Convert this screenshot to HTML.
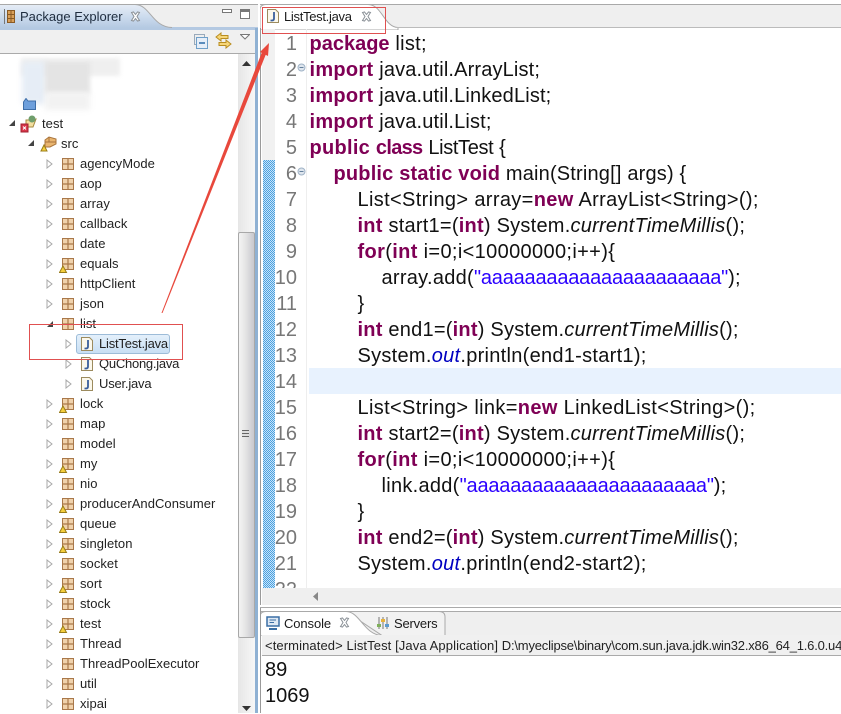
<!DOCTYPE html>
<html><head><meta charset="utf-8"><style>
html,body{margin:0;padding:0}
body{width:841px;height:713px;overflow:hidden;position:relative;background:#fff;font-family:"Liberation Sans",sans-serif;color:#111}
div,svg{position:absolute}
.r{left:80px;font-size:13px;line-height:20px;height:20px;white-space:nowrap;letter-spacing:.05px;color:#222;margin-top:1px}
.c{left:309.5px;font-size:20px;line-height:26px;height:26px;white-space:pre;letter-spacing:.28px;color:#111;margin-top:1px}
.n{left:270px;width:27px;text-align:right;font-size:20px;line-height:26px;height:26px;color:#777;margin-top:1px}
b{color:#7f0055;font-weight:bold}
i.f{color:#0000c0}i.m{color:#111}
.s{color:#2a00ff;letter-spacing:-.2px}
.j{letter-spacing:.15px}
</style></head><body>
<svg width="0" height="0" style="left:0;top:0"><defs>
<symbol id="pk" viewBox="0 0 12 12"><rect x=".5" y=".5" width="11" height="11" fill="#f0d2ac" stroke="#a9784a"/><path d="M6 .5V11.500M.5 6H11.500" stroke="#a9784a" stroke-width="1.200"/></symbol>
<symbol id="pw" viewBox="0 0 15 15"><rect x="3.500" y=".5" width="11" height="11" fill="#f0d2ac" stroke="#a9784a"/><path d="M9 .5V11.500M3.500 6H14.500" stroke="#a9784a" stroke-width="1.200"/><path d="M.5 14.500L4 8L7.500 14.500Z" fill="#f5cf3e" stroke="#9a7d18"/></symbol>
<symbol id="tri" viewBox="0 0 7 10"><path d="M1 1L6 5L1 9Z" fill="#fff" stroke="#a9a9a9"/></symbol>
<symbol id="jf" viewBox="0 0 12 14"><path d="M.5.500H8.500L11.500 3.500V13.500H.5Z" fill="#fbf8ec" stroke="#9c8b5e"/><path d="M7 3V9.500Q7 11.500 5 11.500H3.500" fill="none" stroke="#3a5f9c" stroke-width="1.800"/></symbol>
<symbol id="x" viewBox="0 0 11 11"><path d="M1.500 1.500L3.500 1L5.500 3.500L7.500 1L9.500 1.500L7 5.500L9.500 9.500L7.500 10L5.500 7.500L3.500 10L1.500 9.500L4 5.500Z" fill="#fff" stroke="#8a9096"/></symbol>
<linearGradient id="tb" x1="0" y1="0" x2="0" y2="1"><stop offset="0" stop-color="#e6edf6"/><stop offset=".5" stop-color="#cddcee"/><stop offset="1" stop-color="#b4c9e2"/></linearGradient>
</defs></svg>

<!-- Left view -->
<div style="left:0;top:4px;width:258px;height:23px;background:#efefef;border-top:1px solid #a9a9a9"></div>
<div style="left:0;top:27px;width:258px;height:3px;background:#b4c9e2"></div>
<svg style="left:0;top:4px" width="175" height="24"><path d="M0 .5H135C150 .5 152 23 172 23.500V24H0Z" fill="url(#tb)" stroke="none"/><path d="M0 .5H135C150 .5 152 23 172 23.500" fill="none" stroke="#a9a9a9"/></svg>
<svg style="left:4px;top:9px" width="11" height="15"><path d="M.5 0V15" stroke="#777"/><rect x="3.500" y="1.500" width="7" height="12" fill="#d9a05a" stroke="#8a5a24"/><path d="M7 1V14M3 5.500H11M3 9.500H11" stroke="#8a5a24"/></svg>
<div style="left:20px;top:7px;font-size:13px;line-height:20px;color:#1e2c3e;white-space:nowrap">Package Explorer</div>
<svg style="left:130px;top:11px" width="11" height="11"><use href="#x"/></svg>
<div style="left:222px;top:9px;width:8px;height:2px;border:1px solid #777;background:#fff"></div>
<div style="left:240px;top:9px;width:8px;height:6px;border:1px solid #777;border-top:3px solid #777;background:#fff"></div>
<div style="left:0;top:30px;width:255px;height:23px;background:#f0f0f0;border-bottom:1px solid #aaa"></div>
<svg style="left:194px;top:34px" width="14" height="15"><rect x=".5" y=".5" width="10" height="10" fill="#eee" stroke="#9ab"/><rect x="2.500" y="3.500" width="11" height="11" fill="#e6eef8" stroke="#6f9fc8"/><path d="M5 9H11" stroke="#2b6ca8" stroke-width="1.500"/></svg>
<svg style="left:215px;top:32px" width="17" height="17"><path d="M1 5L6 1V3.500H13V6.500H6V9Z" fill="#f7d679" stroke="#b98d1f"/><path d="M16 12L11 8V10.500H4V13.500H11V16Z" fill="#f7d679" stroke="#b98d1f"/></svg>
<svg style="left:240px;top:34px" width="10" height="6"><path d="M.5 .5H9.500L5 5Z" fill="#fff" stroke="#777"/></svg>
<div style="left:255px;top:28px;width:3px;height:685px;background:#8fb1d3"></div>

<!-- blur patch -->
<div style="left:21px;top:58px;width:99px;height:18px;background:#efefef;filter:blur(2px)"></div>
<div style="left:22px;top:62px;width:24px;height:42px;background:#e6edf6;filter:blur(3px)"></div>
<div style="left:45px;top:62px;width:45px;height:32px;background:#e4e4e4;filter:blur(2px)"></div>
<div style="left:45px;top:92px;width:45px;height:18px;background:#f2f2f2;filter:blur(3px)"></div>
<svg style="left:23px;top:98px" width="13" height="12"><path d="M.5 11.500V4L3 .5L5 3H12.500V11.500Z" fill="#6d9fdc" stroke="#3e6ea8"/></svg>

<!-- Scrollbar -->
<div style="left:238px;top:54px;width:17px;height:659px;background:linear-gradient(90deg,#e6e6e6,#f7f7f7)"></div>
<svg style="left:242px;top:61px" width="9" height="6"><path d="M0 5L4.500 0L9 5Z" fill="#333"/></svg>
<svg style="left:242px;top:706px" width="9" height="5"><path d="M0 0L4.500 5L9 0Z" fill="#333"/></svg>
<div style="left:238px;top:232px;width:15px;height:404px;border:1px solid #a8a8a8;border-radius:2px;background:linear-gradient(90deg,#f3f3f3,#e6e6e6 40%,#c8c8ce)"></div>
<div style="left:242px;top:430px;width:7px;height:7px;background:repeating-linear-gradient(#666 0 1px,#ddd 1px 3px)"></div>

<!-- Tree -->
<svg style="left:8px;top:119px" width="8" height="8"><path d="M7 1V7H1Z" fill="#444"/></svg>
<svg style="left:20px;top:115px" width="18" height="18"><path d="M6 5H13L16 4L13 12H6Z" fill="#f3dfa0" stroke="#a5893f"/><circle cx="12" cy="4" r="3.500" fill="#6f9e6c"/><rect x="1" y="9" width="7" height="8" fill="#d9374a" stroke="#a02030"/><path d="M3 11.500L6 14.500M6 11.500L3 14.500" stroke="#fff"/></svg>
<div class="r" style="left:42px;top:113px">test</div>
<svg style="left:27px;top:139px" width="8" height="8"><path d="M7 1V7H1Z" fill="#444"/></svg>
<svg style="left:40px;top:136px" width="17" height="16"><path d="M5 4L9 1L16 3V8L10 11H5Z" fill="#e9b56f" stroke="#a9743c"/><path d="M9 1V6M5 6H16" stroke="#a9743c"/><path d="M1 15L4 9L7 15Z" fill="#f5cf3e" stroke="#9a7d18"/></svg>
<div class="r" style="left:61px;top:133px">src</div>

<svg style="left:46px;top:159px" width="7" height="10"><use href="#tri"/></svg><svg style="left:62px;top:158px" width="12" height="12"><use href="#pk"/></svg><div class="r" style="top:153px">agencyMode</div>
<svg style="left:46px;top:179px" width="7" height="10"><use href="#tri"/></svg><svg style="left:62px;top:178px" width="12" height="12"><use href="#pk"/></svg><div class="r" style="top:173px">aop</div>
<svg style="left:46px;top:199px" width="7" height="10"><use href="#tri"/></svg><svg style="left:62px;top:198px" width="12" height="12"><use href="#pk"/></svg><div class="r" style="top:193px">array</div>
<svg style="left:46px;top:219px" width="7" height="10"><use href="#tri"/></svg><svg style="left:62px;top:218px" width="12" height="12"><use href="#pk"/></svg><div class="r" style="top:213px">callback</div>
<svg style="left:46px;top:239px" width="7" height="10"><use href="#tri"/></svg><svg style="left:62px;top:238px" width="12" height="12"><use href="#pk"/></svg><div class="r" style="top:233px">date</div>
<svg style="left:46px;top:259px" width="7" height="10"><use href="#tri"/></svg><svg style="left:59px;top:258px" width="15" height="15"><use href="#pw"/></svg><div class="r" style="top:253px">equals</div>
<svg style="left:46px;top:279px" width="7" height="10"><use href="#tri"/></svg><svg style="left:62px;top:278px" width="12" height="12"><use href="#pk"/></svg><div class="r" style="top:273px">httpClient</div>
<svg style="left:46px;top:299px" width="7" height="10"><use href="#tri"/></svg><svg style="left:62px;top:298px" width="12" height="12"><use href="#pk"/></svg><div class="r" style="top:293px">json</div>
<svg style="left:46px;top:320px" width="8" height="8"><path d="M7 1V7H1Z" fill="#444"/></svg><svg style="left:62px;top:318px" width="12" height="12"><use href="#pk"/></svg><div class="r" style="top:313px">list</div>

<div style="left:76px;top:334px;width:92px;height:18px;background:linear-gradient(#e4f0fb,#c8dff4);border:1px solid #9dbcd8;border-radius:3px"></div>
<svg style="left:65px;top:339px" width="7" height="10"><use href="#tri"/></svg><svg style="left:81px;top:337px" width="12" height="14"><use href="#jf"/></svg><div class="r" style="left:99px;top:333px;letter-spacing:-.2px">ListTest.java</div>
<svg style="left:65px;top:359px" width="7" height="10"><use href="#tri"/></svg><svg style="left:81px;top:357px" width="12" height="14"><use href="#jf"/></svg><div class="r" style="left:99px;top:353px;letter-spacing:-.25px">QuChong.java</div>
<svg style="left:65px;top:379px" width="7" height="10"><use href="#tri"/></svg><svg style="left:81px;top:377px" width="12" height="14"><use href="#jf"/></svg><div class="r" style="left:99px;top:373px;letter-spacing:-.2px">User.java</div>

<svg style="left:46px;top:399px" width="7" height="10"><use href="#tri"/></svg><svg style="left:59px;top:398px" width="15" height="15"><use href="#pw"/></svg><div class="r" style="top:393px">lock</div>
<svg style="left:46px;top:419px" width="7" height="10"><use href="#tri"/></svg><svg style="left:62px;top:418px" width="12" height="12"><use href="#pk"/></svg><div class="r" style="top:413px">map</div>
<svg style="left:46px;top:439px" width="7" height="10"><use href="#tri"/></svg><svg style="left:62px;top:438px" width="12" height="12"><use href="#pk"/></svg><div class="r" style="top:433px">model</div>
<svg style="left:46px;top:459px" width="7" height="10"><use href="#tri"/></svg><svg style="left:59px;top:458px" width="15" height="15"><use href="#pw"/></svg><div class="r" style="top:453px">my</div>
<svg style="left:46px;top:479px" width="7" height="10"><use href="#tri"/></svg><svg style="left:62px;top:478px" width="12" height="12"><use href="#pk"/></svg><div class="r" style="top:473px">nio</div>
<svg style="left:46px;top:499px" width="7" height="10"><use href="#tri"/></svg><svg style="left:59px;top:498px" width="15" height="15"><use href="#pw"/></svg><div class="r" style="top:493px">producerAndConsumer</div>
<svg style="left:46px;top:519px" width="7" height="10"><use href="#tri"/></svg><svg style="left:59px;top:518px" width="15" height="15"><use href="#pw"/></svg><div class="r" style="top:513px">queue</div>
<svg style="left:46px;top:539px" width="7" height="10"><use href="#tri"/></svg><svg style="left:59px;top:538px" width="15" height="15"><use href="#pw"/></svg><div class="r" style="top:533px">singleton</div>
<svg style="left:46px;top:559px" width="7" height="10"><use href="#tri"/></svg><svg style="left:62px;top:558px" width="12" height="12"><use href="#pk"/></svg><div class="r" style="top:553px">socket</div>
<svg style="left:46px;top:579px" width="7" height="10"><use href="#tri"/></svg><svg style="left:59px;top:578px" width="15" height="15"><use href="#pw"/></svg><div class="r" style="top:573px">sort</div>
<svg style="left:46px;top:599px" width="7" height="10"><use href="#tri"/></svg><svg style="left:62px;top:598px" width="12" height="12"><use href="#pk"/></svg><div class="r" style="top:593px">stock</div>
<svg style="left:46px;top:619px" width="7" height="10"><use href="#tri"/></svg><svg style="left:59px;top:618px" width="15" height="15"><use href="#pw"/></svg><div class="r" style="top:613px">test</div>
<svg style="left:46px;top:639px" width="7" height="10"><use href="#tri"/></svg><svg style="left:62px;top:638px" width="12" height="12"><use href="#pk"/></svg><div class="r" style="top:633px">Thread</div>
<svg style="left:46px;top:659px" width="7" height="10"><use href="#tri"/></svg><svg style="left:62px;top:658px" width="12" height="12"><use href="#pk"/></svg><div class="r" style="top:653px">ThreadPoolExecutor</div>
<svg style="left:46px;top:679px" width="7" height="10"><use href="#tri"/></svg><svg style="left:62px;top:678px" width="12" height="12"><use href="#pk"/></svg><div class="r" style="top:673px">util</div>
<svg style="left:46px;top:699px" width="7" height="10"><use href="#tri"/></svg><svg style="left:62px;top:698px" width="12" height="12"><use href="#pk"/></svg><div class="r" style="top:693px">xipai</div>

<!-- Editor -->
<div style="left:258px;top:0;width:583px;height:713px;background:#fff"></div>
<div style="left:260px;top:4px;width:581px;height:23px;background:#efefef;border-top:1px solid #a9a9a9"></div>
<svg style="left:260px;top:4px" width="140" height="26"><path d="M0 26V6Q0 .5 6 .5H108C122 .5 124 23 138 23.500V26Z" fill="#fff" stroke="#a9a9a9"/></svg>
<div style="left:396px;top:27px;width:445px;height:1px;background:#bbb"></div>
<div style="left:260px;top:28px;width:1px;height:577px;background:#9a9a9a"></div>
<div style="left:262px;top:29px;width:13px;height:131px;background:#f1f1f1"></div>
<div style="left:263px;top:160px;width:12px;height:428px;background-color:#fff;background-image:conic-gradient(#4aa0e0 25%,#c8e4f8 0 50%,#4aa0e0 0 75%,#c8e4f8 0);background-size:2px 2px"></div>
<div style="left:262px;top:588px;width:579px;height:17px;background:#efefef"></div>
<svg style="left:313px;top:592px" width="6" height="9"><path d="M5 0V9L0 4.500Z" fill="#888"/></svg>
<div style="left:306px;top:29px;width:1px;height:559px;background:#eee"></div>
<div style="left:309px;top:368px;width:532px;height:26px;background:#e8f2fe"></div>

<svg style="left:267px;top:9px" width="12" height="14"><use href="#jf"/></svg>
<div class="r" style="left:284px;top:6px;color:#1a1a1a;letter-spacing:-.3px">ListTest.java</div>
<svg style="left:361px;top:11px" width="11" height="11"><use href="#x"/></svg>
<div style="left:262px;top:7px;width:122px;height:25px;border:1px solid #e05050"></div>

<svg style="left:297px;top:63px" width="9" height="9"><circle cx="4.500" cy="4.500" r="3.500" fill="#dfe6ee" stroke="#9fb2c6"/><path d="M2.500 4.500H6.500" stroke="#64809c"/></svg>
<svg style="left:297px;top:167px" width="9" height="9"><circle cx="4.500" cy="4.500" r="3.500" fill="#dfe6ee" stroke="#9fb2c6"/><path d="M2.500 4.500H6.500" stroke="#64809c"/></svg>

<div class="n" style="top:30px">1</div>
<div class="n" style="top:56px">2</div>
<div class="n" style="top:82px">3</div>
<div class="n" style="top:108px">4</div>
<div class="n" style="top:134px">5</div>
<div class="n" style="top:160px">6</div>
<div class="n" style="top:186px">7</div>
<div class="n" style="top:212px">8</div>
<div class="n" style="top:238px">9</div>
<div class="n" style="top:264px">10</div>
<div class="n" style="top:290px">11</div>
<div class="n" style="top:316px">12</div>
<div class="n" style="top:342px">13</div>
<div class="n" style="top:368px">14</div>
<div class="n" style="top:394px">15</div>
<div class="n" style="top:420px">16</div>
<div class="n" style="top:446px">17</div>
<div class="n" style="top:472px">18</div>
<div class="n" style="top:498px">19</div>
<div class="n" style="top:524px">20</div>
<div class="n" style="top:550px">21</div>
<div style="left:270px;top:578px;width:27px;height:10px;overflow:hidden"><div class="n" style="left:0;top:-2px">22</div></div>

<div class="c" style="top:30px"><b style="letter-spacing:0">package</b> list;</div>
<div class="c" style="top:56px"><b>import</b> <span class="j">java.util.ArrayList;</span></div>
<div class="c" style="top:82px"><b>import</b> <span class="j">java.util.LinkedList;</span></div>
<div class="c" style="top:108px"><b>import</b> <span class="j">java.util.List;</span></div>
<div class="c" style="top:134px"><b>public</b> <b style="letter-spacing:-.7px">class</b> <span style="letter-spacing:-.35px">ListTest</span> {</div>
<div class="c" style="left:333.500px;top:160px;letter-spacing:.18px"><b>public</b> <b>static</b> <b>void</b> main(String[] args) {</div>
<div class="c" style="left:357.500px;top:186px;letter-spacing:.35px">List&lt;String&gt; array=<b>new</b> ArrayList&lt;String&gt;();</div>
<div class="c" style="left:357.500px;top:212px;letter-spacing:.24px"><b>int</b> start1=(<b>int</b>) System.<i class="m">currentTimeMillis</i>();</div>
<div class="c" style="left:357.500px;top:238px;letter-spacing:.35px"><b>for</b>(<b>int</b> i=0;i&lt;10000000;i++){</div>
<div class="c" style="left:381.500px;top:264px">array.add(<span class="s">"aaaaaaaaaaaaaaaaaaaaaa"</span>);</div>
<div class="c" style="left:357.500px;top:290px">}</div>
<div class="c" style="left:357.500px;top:316px;letter-spacing:.23px"><b>int</b> end1=(<b>int</b>) System.<i class="m">currentTimeMillis</i>();</div>
<div class="c" style="left:357.500px;top:342px">System.<i class="f">out</i>.println(end1-start1);</div>
<div class="c" style="left:357.500px;top:394px;letter-spacing:.35px">List&lt;String&gt; link=<b>new</b> LinkedList&lt;String&gt;();</div>
<div class="c" style="left:357.500px;top:420px;letter-spacing:.24px"><b>int</b> start2=(<b>int</b>) System.<i class="m">currentTimeMillis</i>();</div>
<div class="c" style="left:357.500px;top:446px;letter-spacing:.35px"><b>for</b>(<b>int</b> i=0;i&lt;10000000;i++){</div>
<div class="c" style="left:381.500px;top:472px">link.add(<span class="s">"aaaaaaaaaaaaaaaaaaaaaa"</span>);</div>
<div class="c" style="left:357.500px;top:498px">}</div>
<div class="c" style="left:357.500px;top:524px;letter-spacing:.23px"><b>int</b> end2=(<b>int</b>) System.<i class="m">currentTimeMillis</i>();</div>
<div class="c" style="left:357.500px;top:550px">System.<i class="f">out</i>.println(end2-start2);</div>

<!-- Console -->
<div style="left:258px;top:605px;width:583px;height:3px;background:#fff"></div>
<div style="left:260px;top:607px;width:581px;height:1px;background:#aaa"></div>
<div style="left:260px;top:611px;width:581px;height:24px;background:#efefef;border-top:1px solid #aaa"></div>
<svg style="left:260px;top:611px" width="187" height="25"><path d="M86 .5H179Q185 .5 185 6V24.500H122Z" fill="#f2f2f2" stroke="#a9a9a9"/><path d="M0 25V6Q0 .5 6 .5H86C100 .5 104 24 122 24.500V25Z" fill="#fff" stroke="#a9a9a9"/></svg>
<svg style="left:266px;top:616px" width="14" height="14"><rect x="1" y="1" width="12" height="9" fill="#dde8f4" stroke="#3a6ea5" stroke-width="1.500"/><path d="M3.500 4H10M3.500 6.500H8" stroke="#3a6ea5"/><path d="M3 13H11" stroke="#3a6ea5" stroke-width="2"/></svg>
<div class="r" style="left:284px;top:613px;color:#1a1a1a;letter-spacing:-.1px">Console</div>
<svg style="left:339px;top:617px" width="11" height="11"><use href="#x"/></svg>
<svg style="left:376px;top:616px" width="14" height="14"><path d="M3 1V13M7 1V13M11 1V13" stroke="#777"/><rect x="1" y="8" width="4" height="3" fill="#7fb05a"/><rect x="5" y="3" width="4" height="3" fill="#e8b23c"/><rect x="9" y="8" width="4" height="3" fill="#5d9bd0"/></svg>
<div class="r" style="left:394px;top:613px;color:#1a1a1a;letter-spacing:-.2px">Servers</div>
<div style="left:262px;top:635px;width:579px;height:20px;background:#f0f0f0;border-bottom:1px solid #aaa"></div>
<div style="left:265px;top:636px;width:576px;overflow:hidden;font-size:13px;line-height:20px;letter-spacing:.1px;white-space:nowrap;color:#222">&lt;terminated&gt; ListTest [Java Application] <span style="letter-spacing:-.2px">D:\myeclipse\binary\com.sun.java.jdk.win32.x86_64_1.6.0.u43\bin</span></div>
<div style="left:265px;top:657px;font-size:20px;line-height:26px;color:#111">89</div>
<div style="left:265px;top:683px;font-size:20px;line-height:26px;color:#111">1069</div>
<div style="left:260px;top:608px;width:1px;height:105px;background:#9a9a9a"></div>

<!-- Red annotations -->
<div style="left:29px;top:324px;width:152px;height:34px;border:1px solid #e05050"></div>
<svg style="left:155px;top:35px" width="125" height="285"><path d="M6.500 278L7.500 278L111 19L107 17Z" fill="#e8483c"/><path d="M114 8L105 17L113 21Z" fill="#e8483c"/></svg>
</body></html>
